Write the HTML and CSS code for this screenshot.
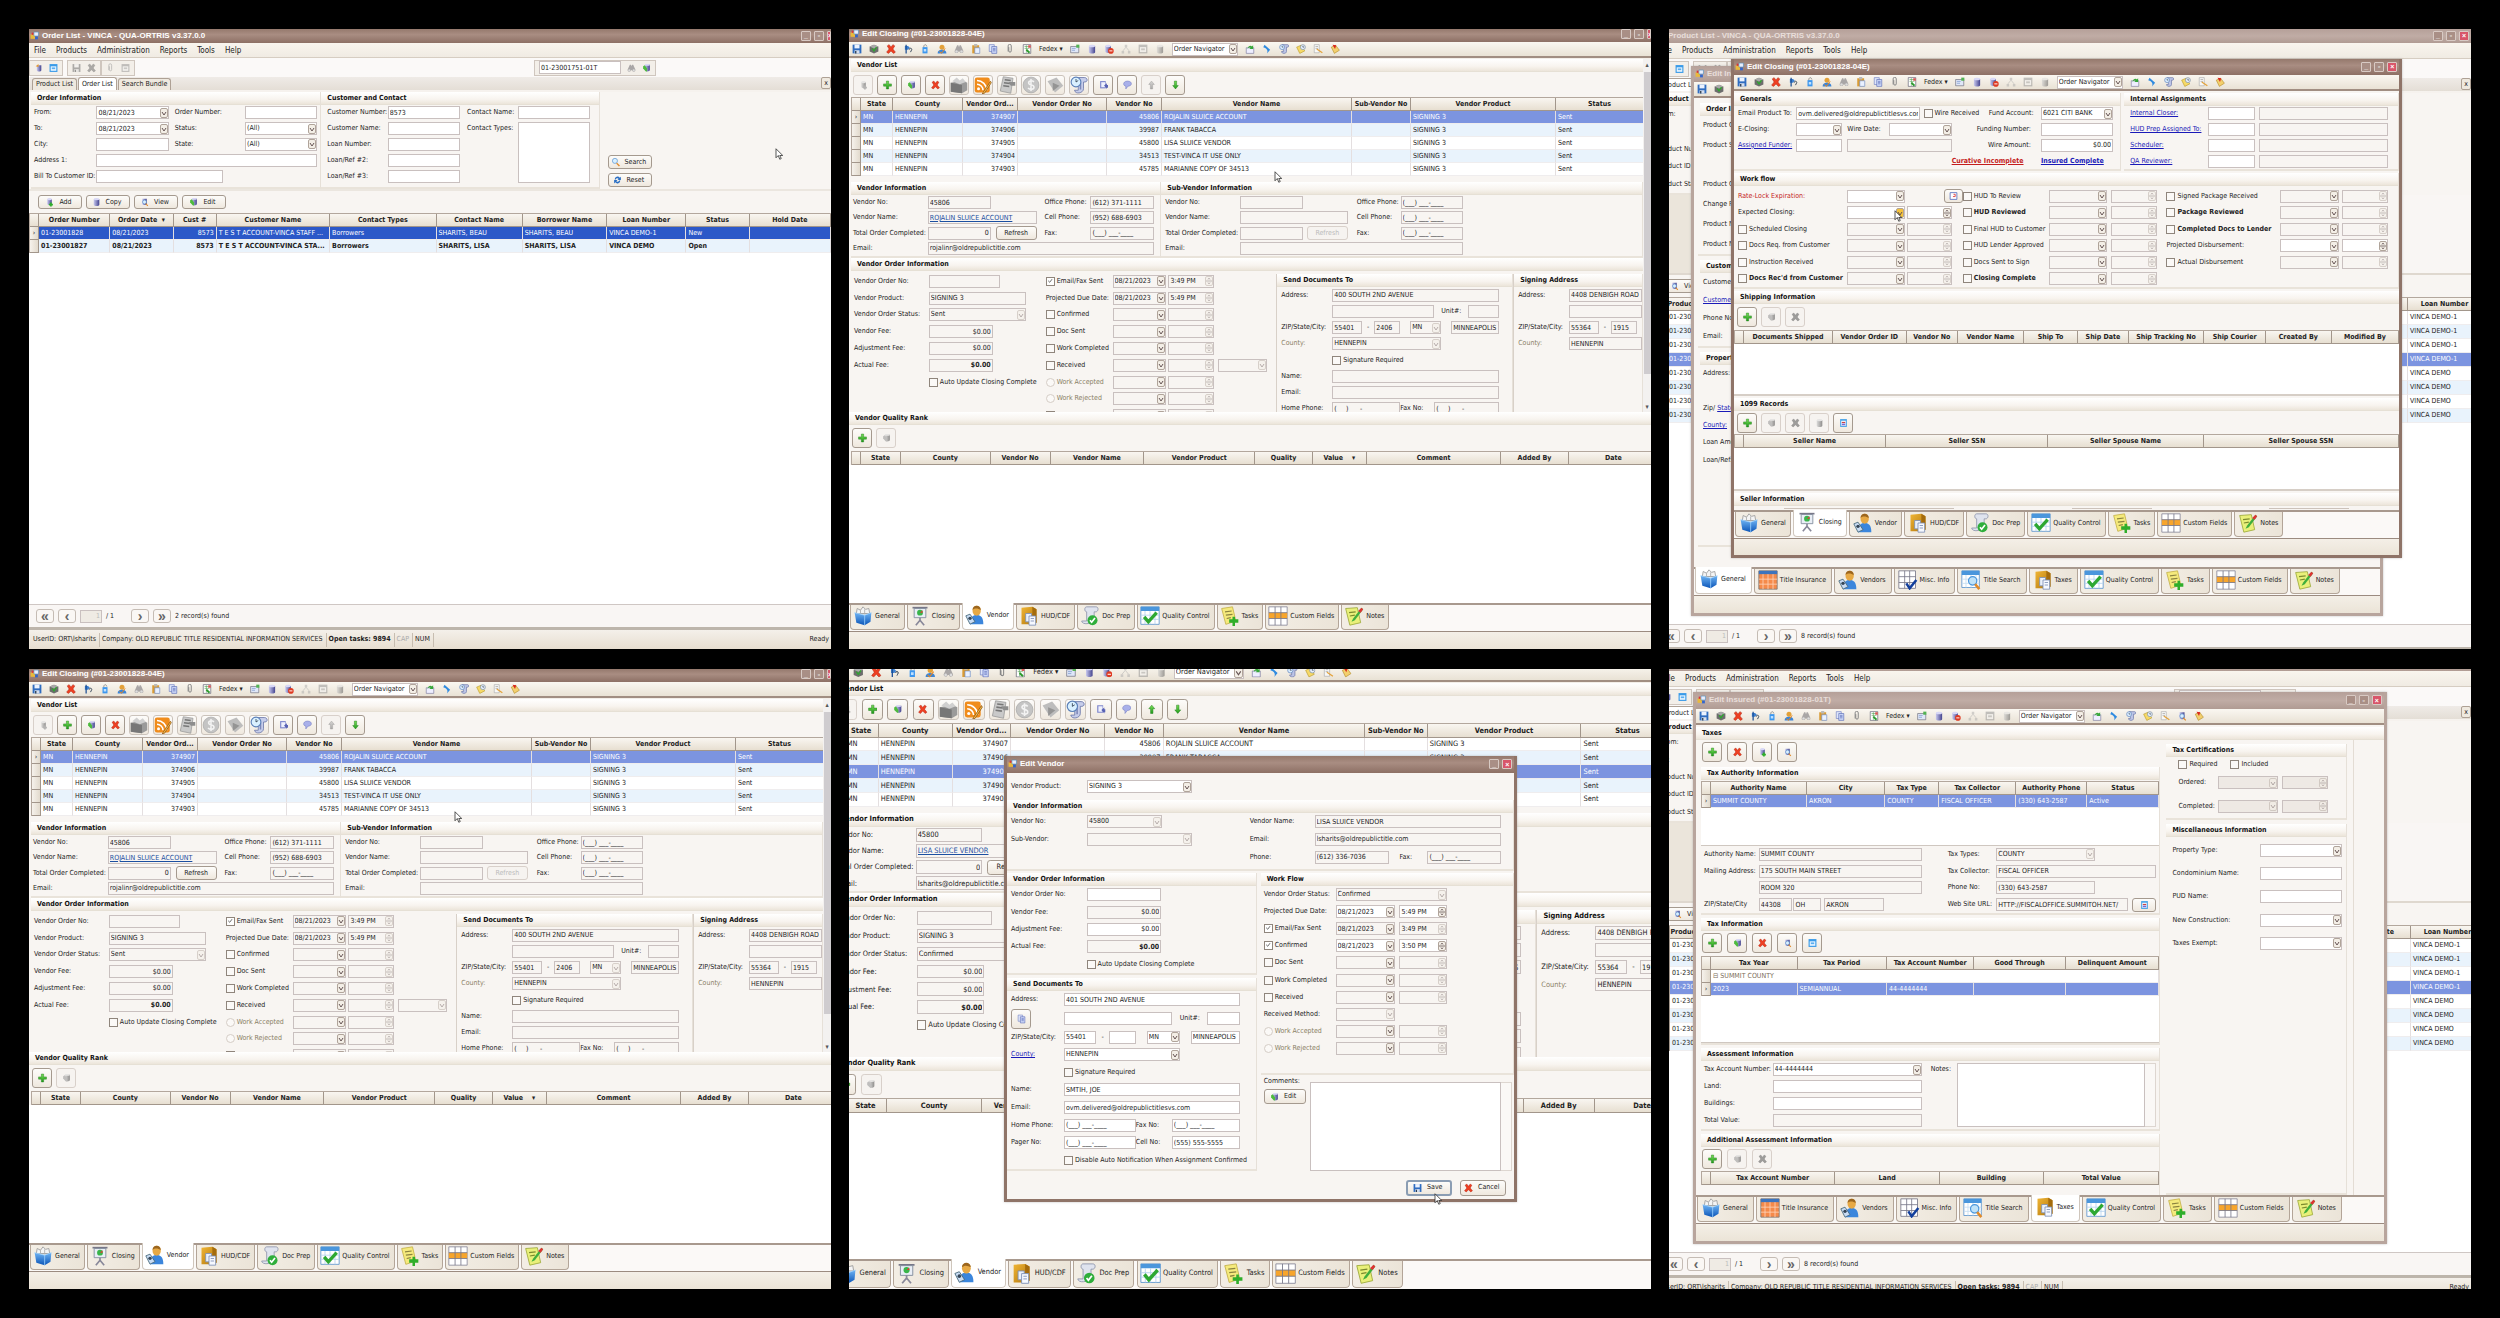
FILE: index.html
```html
<!DOCTYPE html>
<html lang="en">
<head>
<meta charset="utf-8">
<title>VINCA closing walkthrough</title>
<link rel="stylesheet" href="styles.css">
</head>
<body>
<svg class="sprite" aria-hidden="true">
  <defs>
    <linearGradient id="gBlue" x1="0" y1="0" x2="0" y2="1"><stop offset="0" stop-color="#6fb4f4"/><stop offset="1" stop-color="#0b55b8"/></linearGradient>
    <linearGradient id="gCyl" x1="0" y1="0" x2="1" y2="0"><stop offset="0" stop-color="#c9c9ee"/><stop offset="1" stop-color="#44448f"/></linearGradient>
    <linearGradient id="gGreen" x1="0" y1="0" x2="0" y2="1"><stop offset="0" stop-color="#7be05a"/><stop offset="1" stop-color="#1f9a1a"/></linearGradient>
    <linearGradient id="gGold" x1="0" y1="0" x2="1" y2="1"><stop offset="0" stop-color="#f0b535"/><stop offset="1" stop-color="#b0750c"/></linearGradient>
  </defs>
  <symbol id="save" viewBox="0 0 16 16"><path d="M1 1h14v14H1z" fill="#2f6cc0"/><path d="M4 1h8v6H4z" fill="#eaf2ff"/><path d="M4 10h8v5H4z" fill="#d5deee"/><path d="M5 11h2v4H5z" fill="#234"/></symbol>
  <symbol id="safe" viewBox="0 0 16 16"><path d="M1 4l7-3 7 3v8l-7 3-7-3z" fill="#6d6d6d"/><path d="M1 4l7-3 7 3-7 3z" fill="#a9a9a9"/><path d="M5 7l3 4 4-6" stroke="#2ea82e" stroke-width="2" fill="none"/></symbol>
  <symbol id="del" viewBox="0 0 16 16"><path d="M2 3l3-2 3 4 3-4 3 2-3 5 4 5-3 2-4-4-4 4-3-2 4-5z" fill="#ee4023" stroke="#b0200c" stroke-width=".8"/></symbol>
  <symbol id="guide" viewBox="0 0 16 16"><path d="M3 3h5l3 3-3 3H3z" fill="#3b7fd0"/><path d="M5 1v14" stroke="#1d4f94" stroke-width="2"/><path d="M10 9c0-3 4-3 4 0 0 2-2 2-2 4" stroke="#345" stroke-width="1.5" fill="none"/></symbol>
  <symbol id="jar" viewBox="0 0 16 16"><path d="M4 5h8v10H4z" fill="#3d97ee"/><path d="M6 5c0-5 4-5 5-1" stroke="#666" fill="none"/><path d="M6 8h4v4H6z" fill="#bfe0ff"/></symbol>
  <symbol id="user" viewBox="0 0 16 16"><circle cx="8" cy="5" r="4" fill="#e3a13a"/><path d="M1 15c0-5 4-6 7-6s7 1 7 6z" fill="#3c86d8"/><path d="M4 12l3 3 6-8" stroke="#e8851b" stroke-width="1.6" fill="none"/></symbol>
  <symbol id="find" viewBox="0 0 16 16"><path d="M5 2h2l1 3 1-3h2l4 9a3 3 0 0 1-6 1H7a3 3 0 0 1-6-1z" fill="#a9a6a6"/><circle cx="4" cy="12" r="2" fill="#ddd"/><circle cx="12" cy="12" r="2" fill="#ddd"/></symbol>
  <symbol id="paste" viewBox="0 0 16 16"><path d="M2 2h11v13H2z" fill="#d99b35"/><path d="M5 0h5v4H5z" fill="#bbb"/><path d="M6 6h8v9H6z" fill="#e9f1ff" stroke="#6b8ac4"/></symbol>
  <symbol id="copy" viewBox="0 0 16 16"><path d="M2 1h8v11H2z" fill="#dfe6fa" stroke="#6c7cc0"/><path d="M6 4h8v11H6z" fill="#cdd8f8" stroke="#5566b4"/><path d="M8 7h4M8 9h4M8 11h4" stroke="#5566b4"/></symbol>
  <symbol id="clip" viewBox="0 0 16 16"><path d="M6 5v6a2 2 0 0 0 4 0V3a2.500 2.500 0 0 0-5 0v9" stroke="#888" stroke-width="1.600" fill="none"/></symbol>
  <symbol id="sheet" viewBox="0 0 16 16"><path d="M2 1h12v14H2z" fill="#fff" stroke="#556"/><path d="M4 4h8M4 7h8M7 2v12" stroke="#58a558"/><path d="M7 9l5 5" stroke="#2d9a2d" stroke-width="3"/><path d="M10 2h4v4h-4z" fill="#d55"/></symbol>
  <symbol id="mail" viewBox="0 0 16 16"><path d="M1 4h13v10H1z" fill="#dfe7f8" stroke="#667"/><path d="M3 7h6M3 10h5" stroke="#6b8ac4"/><path d="M10 1h5v5h-5z" fill="#53b353"/></symbol>
  <symbol id="db" viewBox="0 0 16 16"><path d="M3 3v10c0 3 10 3 10 0V3z" fill="url(#gCyl)"/><ellipse cx="8" cy="3" rx="5" ry="2" fill="#d8d8f6"/></symbol>
  <symbol id="dbstop" viewBox="0 0 16 16"><path d="M2 3v9c0 3 9 3 9 0V3z" fill="url(#gCyl)"/><ellipse cx="6.500" cy="3" rx="4.500" ry="2" fill="#d8d8f6"/><circle cx="11" cy="11" r="4.500" fill="#df3a22"/><path d="M8.500 11h5" stroke="#fff" stroke-width="1.500"/></symbol>
  <symbol id="tree" viewBox="0 0 16 16"><path d="M6 1h4v4H6zM1 11h4v4H1zM11 11h4v4h-4z" fill="#aaa"/><path d="M8 5L3 11M8 5l5 6" stroke="#aaa" stroke-width="1.500"/></symbol>
  <symbol id="cal" viewBox="0 0 16 16"><path d="M1 1h14v14H1z" fill="#3a9be8"/><path d="M3 5h10v8H3z" fill="#e5f4ff"/><path d="M5 7h6v3H5z" fill="#5aaef0"/></symbol>
  <symbol id="out" viewBox="0 0 16 16"><path d="M2 6h12v9H2z" fill="#eef" stroke="#779"/><path d="M4 8c1-6 6-6 7-4l2-2v6H7l2-2c-2-1-4 0-5 2z" fill="#34a837"/></symbol>
  <symbol id="dart" viewBox="0 0 16 16"><path d="M4 1l9 8-5 6c2-5 0-8-6-10z" fill="#2f8be0"/></symbol>
  <symbol id="scroll" viewBox="0 0 16 16"><path d="M5 1h9c2 0 2 4 0 4h-2v7c0 4-8 4-8 0h3V4c0-3-4-2-4 0z" fill="#bcc4e6" stroke="#6470a4"/><circle cx="5" cy="5" r="4" fill="#d9ecff" stroke="#5b80b8"/><path d="M5 3v2h2" stroke="#345" fill="none"/></symbol>
  <symbol id="memo" viewBox="0 0 16 16"><path d="M1 5l7-3 6 9-8 4z" fill="#f6d967" stroke="#b89a30"/><circle cx="11" cy="5" r="4" fill="#e4edfa" stroke="#789"/><path d="M11 3v2h2" stroke="#345" fill="none"/></symbol>
  <symbol id="pen" viewBox="0 0 16 16"><path d="M2 1h8v13H2z" fill="#f7f7f7" stroke="#aaa"/><path d="M4 4h4M4 7h4" stroke="#999"/><path d="M6 8l9 6" stroke="#e4a33a" stroke-width="2"/></symbol>
  <symbol id="tag" viewBox="0 0 16 16"><path d="M2 5l7-3 6 8-8 5z" fill="#f3cf6d" stroke="#b48e2e"/><path d="M4 1l6 1-2 6z" fill="#d9261c"/></symbol>
  <symbol id="add" viewBox="0 0 16 16"><path d="M6 1h4v5h5v4h-5v5H6v-5H1V6h5z" fill="url(#gGreen)" stroke="#1c7d18" stroke-width=".8"/></symbol>
  <symbol id="edit" viewBox="0 0 16 16"><path d="M5 2v9c0 4 9 4 9 0V2z" fill="url(#gCyl)"/><ellipse cx="9.500" cy="2.500" rx="4.500" ry="1.500" fill="#d8d8f6"/><path d="M2 5l3-2 4 6v5H7L2 9z" fill="#4dbb3d"/></symbol>
  <symbol id="dbadd" viewBox="0 0 16 16"><path d="M4 3v8c0 3 8 3 8 0V3z" fill="url(#gCyl)"/><ellipse cx="8" cy="3" rx="4" ry="2" fill="#d8d8f6"/><path d="M9 9h3v2h2v3h-2v2H9v-2H7v-3h2z" fill="#2fae2b"/></symbol>
  <symbol id="dbfind" viewBox="0 0 16 16"><path d="M4 2v9c0 3 8 3 8 0V2z" fill="url(#gCyl)"/><circle cx="8" cy="8" r="3.500" fill="#d8efff" stroke="#467cc0"/><path d="M10 11l4 4" stroke="#e08a2a" stroke-width="2"/></symbol>
  <symbol id="crate" viewBox="0 0 24 24"><path d="M1 9l16-3 6 3v10l-7 4-15-2z" fill="#9a9a9a"/><path d="M1 9l15 3v11L1 21z" fill="#777"/><path d="M3 7l6-5 4 4 4-3 4 5-8 3z" fill="#d0d0d0"/></symbol>
  <symbol id="rss" viewBox="0 0 24 24"><rect x="1" y="2" width="20" height="20" rx="3" fill="#f08c1c"/><circle cx="6" cy="17" r="2" fill="#fff"/><path d="M4 11a8 8 0 0 1 8 8M4 6a13 13 0 0 1 13 13" stroke="#fff" stroke-width="2" fill="none"/><path d="M22 7L12 22l-1 2 3-1L23 9z" fill="#f7c14a" stroke="#8d5314"/></symbol>
  <symbol id="form" viewBox="0 0 24 24"><path d="M7 1l13 2-3 20-14-3z" fill="#c9c9c9" stroke="#999"/><path d="M9 5l8 1M8 9l8 1M7 13l8 1" stroke="#777" stroke-width="2"/><path d="M14 8h9v5h-6z" fill="#8d8d8d"/></symbol>
  <symbol id="coin" viewBox="0 0 24 24"><circle cx="12" cy="12" r="10.500" fill="#c4c4c4" stroke="#aaa"/><path d="M16 8c-3-3-8-1-7 2 1 3 7 1 7 5 0 3-5 4-8 1M12 4v16" stroke="#f3f3f3" stroke-width="2" fill="none"/></symbol>
  <symbol id="send" viewBox="0 0 24 24"><path d="M2 7l12-5 9 11-11 9z" fill="#bdbdbd"/><path d="M9 9l9 4-9 7z" fill="#949494"/></symbol>
  <symbol id="scrolls" viewBox="0 0 24 24"><path d="M10 2h9c5 0 5 6 1 6h-2v9c0 6-11 8-12 2h5V7c0-3-1-5-1-5z" fill="#c6cdea" stroke="#6470a4"/><path d="M14 9v9" stroke="#7f88b8" stroke-width="2"/><circle cx="8" cy="8" r="6.500" fill="#d9f0ff" stroke="#5b80b8" stroke-width="1.500"/><path d="M8 4v4l3-2" stroke="#234" fill="none"/></symbol>
  <symbol id="clip2" viewBox="0 0 16 16"><path d="M2 1h10v13H2z" fill="#7e86cc"/><path d="M4 3h7v9H4z" fill="#eef0fd"/><path d="M9 9l5-4v3h2v5h-2v2z" fill="#5862b4"/></symbol>
  <symbol id="talk" viewBox="0 0 16 16"><path d="M8 1c9 0 9 9 1 9l-4 5v-5C-1 9 0 1 8 1z" fill="#a9b0ea" stroke="#767ec4"/></symbol>
  <symbol id="up" viewBox="0 0 16 16"><path d="M8 1l5 6h-3v8H6V7H3z" fill="url(#gGreen)" stroke="#1c7d18" stroke-width=".8"/></symbol>
  <symbol id="down" viewBox="0 0 16 16"><path d="M8 15l5-6h-3V1H6v8H3z" fill="url(#gGreen)" stroke="#1c7d18" stroke-width=".8"/></symbol>
  <symbol id="web" viewBox="0 0 16 16"><path d="M2 1h12v14H2z" fill="#4aa4e8"/><path d="M4 4h8v9H4z" fill="#fff"/><path d="M5 6h6v2H5z" fill="#c74545"/><path d="M5 9h6v3H5z" fill="#7a6ad0"/></symbol>
  <symbol id="page" viewBox="0 0 16 16"><path d="M2 2h12v12H2z" fill="#fff" stroke="#5570c0" stroke-width="1.500"/><path d="M8 5h3v4H7" stroke="#d33" stroke-width="1.500" fill="none"/></symbol>
  <symbol id="lens" viewBox="0 0 16 16"><circle cx="7" cy="6" r="4.500" fill="#d8efff" stroke="#6fa3d8" stroke-width="1.500"/><path d="M10 10l5 5" stroke="#e08a2a" stroke-width="2.500"/></symbol>
  <symbol id="cycle" viewBox="0 0 16 16"><path d="M3 7a5 5 0 0 1 9-3l2-2v6H8l2-2a3 3 0 0 0-5 1zM13 9a5 5 0 0 1-9 3l-2 2V8h6l-2 2a3 3 0 0 0 5-1z" fill="#2b6fc4"/></symbol>
  <symbol id="bolt" viewBox="0 0 16 16"><path d="M5 3v9c0 3 8 3 8 0V3z" fill="url(#gCyl)"/><path d="M3 5l5-4v5z" fill="#e89a2a"/></symbol>
  <symbol id="app" viewBox="0 0 16 16"><path d="M1 5h8v8H1z" fill="#e9b93c"/><path d="M7 1h8v7H7z" fill="#e9eefc" stroke="#48b"/><path d="M3 2h3v4H3z" fill="#d33"/><path d="M9 9h5v5H9z" fill="#36c"/></symbol>
  <symbol id="bucket" viewBox="0 0 24 24"><path d="M4 9l1-6 4 2 3-4 3 3 4-1 1 6z" fill="#f4f4f4" stroke="#999"/><path d="M9 5v5M14 4v6" stroke="#aaa"/><path d="M2 8l12 3 8-3-1 11-7 4-10-3z" fill="url(#gBlue)"/><path d="M2 8l12 3 8-3M14 11v12" stroke="#9bd1ff" fill="none"/></symbol>
  <symbol id="board" viewBox="0 0 24 24"><path d="M3 2h18" stroke="#778" stroke-width="2"/><path d="M5 3h14v11H5z" fill="#e9eef6" stroke="#7b8798"/><circle cx="12" cy="8" r="3.500" fill="#39b54a"/><path d="M12 8l3-3v3z" fill="#e33"/><path d="M12 14v5M12 17l-5 6M12 17l5 6" stroke="#889" stroke-width="2"/></symbol>
  <symbol id="person" viewBox="0 0 24 24"><path d="M6 23c0-8 3-11 8-11s8 3 8 11z" fill="#3b86dc"/><ellipse cx="14" cy="7" rx="5" ry="6" fill="#e7a944"/><path d="M9 6c0-7 10-7 10 0-3-2-7-3-10 0z" fill="#9c661e"/><path d="M1 13l5-2 6 9-6 3z" fill="#c9dcf4" stroke="#467"/><circle cx="6" cy="16" r="2" fill="#345"/></symbol>
  <symbol id="folder" viewBox="0 0 24 24"><path d="M3 2l13-1 5 3v16l-3 2H3z" fill="url(#gGold)"/><path d="M16 1l5 3v16l-5-2z" fill="#a56c0c"/><path d="M8 9h7v10H8z" fill="#eaf0fa" stroke="#7b8fb5"/><path d="M12 12h8v11h-8z" fill="#f6f9ff" stroke="#7b8fb5"/><path d="M14 15h4M14 18h4" stroke="#7b8fb5"/></symbol>
  <symbol id="roll" viewBox="0 0 24 24"><path d="M8 1h11c4 0 3 6 0 6h-2v8c0 6-14 9-15 3h6V7c-3 0-3-6 0-6z" fill="#dfe3ee" stroke="#8d94ab"/><circle cx="15" cy="17" r="6" fill="#2fae3b"/><path d="M12 17l2 2.500 4-5" stroke="#fff" stroke-width="2" fill="none"/></symbol>
  <symbol id="check" viewBox="0 0 24 24"><path d="M1 1h22v21H1z" fill="#fff" stroke="#5c94cc"/><path d="M1 1h22v5H1z" fill="#4a96dc"/><path d="M6 6v16M12 6v16M18 6v16M1 11h22M1 16h22" stroke="#b6d2ee"/><path d="M5 13l5 6L20 8" stroke="#2da832" stroke-width="4" fill="none"/></symbol>
  <symbol id="todo" viewBox="0 0 24 24"><path d="M2 3l13-2 4 17-12 4z" fill="#f5ea7c" stroke="#c4b14a"/><path d="M6 7l8-1M7 11l8-1M8 15l5-1" stroke="#8b8340" stroke-width="1.500"/><path d="M15 13h3v3h4v4h-4v4h-3v-4h-4v-4h4z" fill="#2fae2b"/></symbol>
  <symbol id="grid3" viewBox="0 0 24 24"><path d="M1 1h22v22H1z" fill="#fff" stroke="#889"/><path d="M1 8h22v7H1z" fill="#f7a52c"/><path d="M8.500 1v22M15.500 1v22M1 8h22M1 15h22" stroke="#778"/></symbol>
  <symbol id="note" viewBox="0 0 24 24"><path d="M2 3l14-1 4 18-13 3z" fill="#e9f07a" stroke="#9caa3a"/><path d="M6 8l8-1M7 12l6-1" stroke="#7b8a2e" stroke-width="1.500"/><path d="M21 2l2 2-10 13-4 2 2-4z" fill="#3fae3d"/><path d="M21 2l2 2-3 4-3-2z" fill="#d33"/></symbol>
  <symbol id="ogrid" viewBox="0 0 24 24"><path d="M1 1h22v22H1z" fill="#f58a4a" stroke="#777"/><path d="M1 1h22v4H1z" fill="#3d74bd"/><path d="M6 5v18M12 5v18M18 5v18M1 11h22M1 17h22" stroke="#fdd2b8"/></symbol>
  <symbol id="misc" viewBox="0 0 24 24"><path d="M1 1h20v21H1z" fill="#fff" stroke="#778"/><path d="M8 1v21M14 1v21M1 8h20M1 15h20" stroke="#778"/><path d="M10 16l4 6 8-10" stroke="#123f9c" stroke-width="3" fill="none"/></symbol>
  <symbol id="tsearch" viewBox="0 0 24 24"><path d="M1 1h21v20H1z" fill="#fff" stroke="#5c94cc"/><path d="M1 1h21v5H1z" fill="#4a96dc"/><path d="M6 6v15M12 6v15M18 6v15M1 11h21M1 16h21" stroke="#c4dcf2"/><circle cx="14" cy="13" r="5" fill="#bfe2f8" stroke="#4a96dc" stroke-width="1.500"/><path d="M17 17l5 6" stroke="#e08a2a" stroke-width="3"/></symbol>
  <symbol id="ptr" viewBox="0 0 10 16"><path d="M1 1v12l3-3 2 5 2-1-2-4h4z" fill="#fff" stroke="#222"/></symbol>
</svg>
<main class="wall" id="wall"></main>
<script src="app.js"></script>
</body>
</html>
```
FILE: styles.css
```css
* { box-sizing: border-box; margin: 0; padding: 0; }
body {
  background: #000;
  color: #222;
  font: 7px/9px "DejaVu Sans Condensed", "Liberation Sans", Arial, sans-serif;
}
.sprite { position: absolute; width: 0; height: 0; }
.ic { display: block; width: 9px; height: 10px; flex: none; }
.dim { filter: grayscale(1) opacity(.5); }
input, select, textarea, button { font: inherit; color: inherit; min-width: 0; border-radius: 0; outline: 0; }
a { color: #1a1ab8; }
label, h3, .cell { white-space: nowrap; min-width: 0; }

/* Six captured screens, three across */
.wall {
  display: grid;
  grid-template-columns: repeat(3, minmax(0, 1fr));
  grid-template-rows: repeat(2, minmax(0, 1fr));
  gap: 20px 18px;
  height: 100vh;
  min-height: 1100px;
  padding: 29px;
}
.panel { position: relative; overflow: hidden; background: #f8f5f2; display: flex; flex-direction: column; }
.fill { flex: 1; background: #fff; min-height: 0; }

/* Window chrome */
.title {
  height: 14px; flex: none; display: flex; align-items: center; gap: 3px; padding: 0 2px 1px 1px;
  background: linear-gradient(#95796d, #a98d82 40%, #8d7065);
  color: #fff; font: bold 8px/10px "Liberation Sans", Arial, sans-serif;
}
.title span { flex: 1; white-space: nowrap; }
.title.faded { background: linear-gradient(#b5a099, #c0aca5 50%, #b09b93); color: #e8deda; }
.title.tall { height: 16px; }
.title.short { height: 13px; padding-bottom: 3px; }
.title button { width: 10px; height: 10px; border: 1px solid #d8cac4; background: #a98f86; color: #fff; font-size: 7px; line-height: 7px; border-radius: 1px; }
.title button.close { background: #d8566a; }
.title.edge button.close { width: 4px; margin-right: -2px; overflow: hidden; }
.menu { height: 15px; flex: none; display: flex; align-items: center; gap: 10px; padding-left: 5px; font-size: 8px; background: linear-gradient(#f9f5ee, #f0ebe3); border-bottom: 1px solid #d6cdc2; }
.menu a { color: #222; text-decoration: none; }
.tools { height: 16px; flex: none; display: flex; align-items: center; gap: 7px; padding: 0 3px; background: linear-gradient(#faf7f1, #e9e2d5); border-bottom: 2px solid #a18e82; }
.tools .ic { width: 10px; }
.tools .drop { font-size: 7px; border: 0; background: none; white-space: nowrap; }
.tools .dd { width: 66px; }
.maintools { height: 19px; flex: none; display: flex; align-items: center; background: #fbf9f8; }
.maintools div { height: 16px; display: flex; align-items: center; gap: 6px; padding: 0 4px; border: 1px solid #cfc6be; background: #f3efe9; }
.maintools div:nth-child(2) { margin-left: 4px; }
.maintools .goto { margin-left: auto; margin-right: 175px; }
.maintools .goto .in { width: 82px; }
.doctabs { height: 15px; flex: none; display: flex; align-items: flex-end; gap: 1px; padding-left: 3px; background: linear-gradient(#efebe7, #e4ded6); border-bottom: 2px solid #f6f2ee; }
.doctabs button { height: 12px; padding: 0 3px; border: 1px solid #aea195; border-bottom: 0; background: #efe9df; border-radius: 3px 3px 0 0; white-space: nowrap; }
.doctabs .on { background: #fff; height: 13px; }
.doctabs .shut { margin-left: auto; padding: 0 2px; border-radius: 2px; border-bottom: 1px solid #aea195; margin-bottom: 1px; }
.pager { height: 23px; flex: none; display: flex; align-items: center; gap: 4px; padding-left: 7px; border-top: 1px solid #cfc7c4; background: #f9f6f4; }
.pager button { width: 18px; height: 14px; border: 1px solid #c5bcb4; border-radius: 3px; background: #faf7f4; color: #666; font: bold 14px/9px "Liberation Sans", Arial, sans-serif; }
.pager .in { width: 22px; text-align: right; background: #efebe4; color: #bbb; }
.pager .cell { width: 21px; }
.status { height: 22px; flex: none; display: flex; align-items: center; padding: 1px 2px 0; background: linear-gradient(#f4f0ea, #e7ded0); border-top: 3px solid #bdb5ab; }
.status span { padding: 0 3px 0 2px; border-right: 1px solid #c7bdb0; height: 14px; line-height: 13px; white-space: nowrap; }
.status span:last-child { margin-left: auto; border: 0; padding: 0; }
.off { color: #aaa; }
.foot { height: 18px; flex: none; border-top: 1px solid #9b8b80; background: linear-gradient(#f4efe7, #ebe4d7); }

/* Grouped sections */
.grp { display: flex; flex-direction: column; min-width: 0; flex: none; background: #f8f5f2; border-right: 1px solid #e6e0d8; border-bottom: 2px solid #e9e3da; }
.grp h3, .head { height: 13px; flex: none; padding-left: 6px; font-size: 7px; line-height: 12px; font-weight: bold; color: #111; background: linear-gradient(#fff, #f8f4ef 60%, #ece5da); border-bottom: 1px solid #e6e0d5; }
.form { flex: 1; display: grid; grid-auto-rows: 1fr; align-items: center; padding-left: 2px; min-height: 0; }
.form > * { min-width: 0; }
.pair { display: flex; flex: none; }
.bar { display: flex; align-items: center; gap: 4px; padding: 0 3px; flex: none; height: 26px; }
.bar.low { height: 23px; }

/* Controls */
.in, .dd, .sp { height: 13px; width: 100%; border: 1px solid #c9c0bf; background: #fff; padding: 0 1px; display: block; text-overflow: clip; }
.dd, .sp { display: flex; align-items: center; padding-right: 0; }
.dd input, .dd select, .sp input { flex: 1; width: 100%; border: 0; background: none; appearance: none; height: 11px; }
.dd i, .sp i { flex: none; width: 8px; height: 10px; border: 1px solid #b0a49a; border-radius: 2px; background: #f3eee6 url("data:image/svg+xml,%3Csvg xmlns='http://www.w3.org/2000/svg' viewBox='0 0 8 10'%3E%3Cpath d='M2 4l2 3 2-3' fill='none' stroke='%23655' stroke-width='1'/%3E%3C/svg%3E") center / 8px 10px no-repeat; }
.sp i { background-image: url("data:image/svg+xml,%3Csvg xmlns='http://www.w3.org/2000/svg' viewBox='0 0 8 10'%3E%3Cpath d='M1 5h6M3 3.500l1-1.500 1 1.500M3 6.500l1 1.500 1-1.500' fill='none' stroke='%23655' stroke-width='.8'/%3E%3C/svg%3E"); }
.ro { background: #f8f5f2; }
.dis { background: #eee9e4; }
.sp.ro i, .dd.lite i { opacity: .45; }
.hot i { background-color: #f5c33b; }
.num input, .num { text-align: right; }
.b { font-weight: bold; }
.lk { color: #1c4fa0; text-decoration: underline; }
.ck { display: flex; align-items: center; gap: 2px; }
.ck input { appearance: none; width: 9px; height: 9px; border: 1px solid #8f857c; background: #fbf9f7; flex: none; }
.ck input:checked { background: #fff url("data:image/svg+xml,%3Csvg xmlns='http://www.w3.org/2000/svg' viewBox='0 0 9 9'%3E%3Cpath d='M1.500 3.500l2 2 3-4' fill='none' stroke='%23444'/%3E%3C/svg%3E") no-repeat; }
.ck input[type=radio] { border-radius: 50%; border-color: #d5cdc6; }
.ck.mute, .mute { color: #8a8065; }
.red { color: #c41d1d; }
.area { width: 100%; height: 100%; border: 1px solid #c9c0bf; background: #fff; resize: none; display: block; }
.btn { height: 15px; display: flex; align-items: center; justify-content: center; gap: 5px; padding: 0 6px 0 3px; border: 1px solid #a59a8f; border-radius: 3px; background: linear-gradient(#fdfcfa, #efe8de); white-space: nowrap; }
.btn.w { width: 44px; height: 14px; }
.btn.flat { width: 100%; height: 14px; padding: 0; }
.btn:disabled { color: #bbb; border-color: #d8d0ca; background: #f6f3f0; }
.btn:disabled .ic { filter: grayscale(1) opacity(.6); }
.sq { width: 20px; height: 20px; padding: 0; gap: 0; }
.sq.big { border-color: #cbc3bb; }
.sq.big .ic { width: 18px; height: 18px; }
.r { text-align: right; padding-right: 5px; }

/* Column placement shared by every form grid */
.c1 { grid-column-start: 1; }
.c2 { grid-column-start: 2; } .c3 { grid-column-start: 3; } .c4 { grid-column-start: 4; } .c5 { grid-column-start: 5; }
.c6 { grid-column-start: 6; } .c7 { grid-column-start: 7; } .c8 { grid-column-start: 8; } .c9 { grid-column-start: 9; }
.c10 { grid-column-start: 10; } .c11 { grid-column-start: 11; } .c12 { grid-column-start: 12; } .c13 { grid-column-start: 13; } .c15 { grid-column-start: 15; }
.s2 { grid-column-end: span 2; } .s3 { grid-column-end: span 3; } .s4 { grid-column-end: span 4; } .s5 { grid-column-end: span 5; }
.s6 { grid-column-end: span 6; } .s9 { grid-column-end: span 9; }

/* Data tables */
.tbl { width: 100%; table-layout: fixed; border-collapse: separate; border-spacing: 0; background: #fff; border: 1px solid #b3a79d; border-width: 1px 0 0 1px; flex: none; }
.tbl th { height: 13px; font-size: 7px; line-height: 9px; overflow: hidden; white-space: nowrap; background: linear-gradient(#f9f6f1, #e7dfd1); border: solid #a2968b; border-width: 0 1px 1px 0; }
.tbl td { height: 13px; padding: 0 2px; overflow: hidden; white-space: nowrap; border-right: 1px solid #e4dfe0; border-bottom: 1px solid #efedee; }
.tbl td.h { background: linear-gradient(90deg, #f6f2ec, #e2dacd); border-color: #a2968b; padding: 0; text-align: center; }
.tbl tr:nth-child(even) td:not(.h) { background: #e9f3fc; }
.tbl tr.sel td:not(.h) { background: #7c94e0; color: #fff; }
.tbl.deep tr.sel td:not(.h) { background: #2c58c8; }
.tbl .n { text-align: right; }
.tallrows td { height: 14px; }
.tree td { background: #fff; color: #7b6d58; }

/* Bottom navigation */
.navtabs { height: 28px; flex: none; display: flex; gap: 2px; padding: 0 1px 1px; border-top: 2px solid #a8998e; background: #fbf9f7; }
.navtabs button { display: flex; align-items: center; gap: 2px; padding: 0 4px 2px 2px; border: 1px solid #b3a598; border-top: 0; border-radius: 0 0 4px 4px; background: linear-gradient(90deg, #f3eee5, #ebe4d8); white-space: nowrap; }
.navtabs .on { background: #fff; margin-top: -2px; border-color: #cfc6bc; }
.navtabs .ic { width: 20px; height: 20px; }
.win .navtabs button { padding: 0 4px 2px 3px; }
.back .navtabs button { padding: 0 5px 2px 3px; }

/* Order list */
.search { display: flex; height: 99px; flex: none; border-bottom: 2px solid #ebe6df; padding-left: 2px; }
.search .form { padding-bottom: 3px; }
.ol-a { flex: 293; } .ol-a .form { padding-left: 3px; grid-template-columns: 63fr 73fr 6fr 49fr 22fr 73fr 3fr; }
.ol-b { flex: 281; } .ol-b .form { padding-left: 6px; grid-template-columns: 61fr 73fr 7fr 51fr 73fr 9fr; }
.ol-c { flex: 226; display: flex; flex-direction: column; justify-content: flex-end; gap: 4px; padding: 0 0 2px 8px; }
.types { grid-row: 2 / span 4; grid-column-start: 5; align-self: stretch; padding: 1px 0; }
.acts { height: 22px; padding-left: 9px; }

/* Edit Closing, vendor page */
.vend { flex: 1; display: flex; flex-direction: column; min-height: 0; }
.top { height: 354px; flex: none; display: flex; border-top: 1px solid #f3eee8; }
.body { flex: 1; min-width: 0; padding-left: 2px; display: flex; flex-direction: column; overflow: hidden; }
.sbar { width: 8px; flex: none; display: flex; flex-direction: column; align-items: center; background: #f3f1f0; color: #555; font-size: 7px; padding-top: 2px; }
.sbar b { width: 7px; height: 302px; background: #cfcccf; margin: 2px 0 auto; }
.body .icons { height: 25px; gap: 4px; padding-left: 2px; }
.vi { height: 76px; margin-top: 6px; }
.vi-a { flex: 310; } .vi-a .form { grid-template-columns: 75fr 63fr 5fr 41fr 8fr 46fr 64fr 6fr; }
.vi-b { flex: 482; } .vi-b .form { padding-left: 4px; grid-template-columns: 75fr 63fr 4fr 41fr 9fr 44fr 63fr 179fr; }
.voi { flex: 1; display: flex; overflow: hidden; min-height: 0; }
.voi-a.form { flex: 426; height: 151px; margin-top: 2px; padding-left: 3px; grid-template-columns: 75fr 64fr 7fr 26fr 20fr 67fr 54fr 2fr 46fr 4fr 49fr 9fr; }
.voi .grp { margin-top: 3px; height: 145px; border-left: 1px solid #d8d0c8; }
.voi .voi-b { flex: 237; } .voi-b .form { padding-left: 4px; grid-template-columns: 51fr 30fr 12fr 26fr 10fr 24fr 7fr 10fr 17fr 31fr 13fr; }
.voi .voi-c { flex: 129; overflow: hidden; } .voi-c .form { padding-left: 4px; grid-template-columns: 51fr 30fr 12fr 26fr 5fr; }
.rank { margin-right: -8px; padding-left: 2px; }
.zoomed { position: absolute; zoom: 1.06; left: -16px; top: -17px; width: 106%; height: 106%; display: flex; flex-direction: column; }

/* Windows floating over another screen */
.win { position: absolute; display: flex; flex-direction: column; background: #f8f5f2; border: solid #8f7468; border-width: 0 3px 3px; box-shadow: 0 0 2px #8888; overflow: hidden; }
.win.back { border-color: #b8a59d; }
.cur { position: absolute; width: 8px; height: 12px; }
.cur-1 { left: 93%; top: 119px; } .cur-2 { left: 53%; top: 142px; } .cur-3 { left: 28%; top: 181px; } .cur-4 { left: 73%; top: 524px; }
.desk { height: calc(100% + 20px); flex: none; display: flex; flex-direction: column; margin-left: -14px; }
.desk.up { margin: -12px 0 0 -11px; }
.desk .menu { height: 16px; } .desk .doctabs { height: 15px; }
.desk-search { height: 102px; width: 300px; flex: none; }
.desk-search .form { padding-left: 3px; }
.shade { height: 80px; flex: none; background: linear-gradient(90deg, #ebe5db 50%, #f9f6f4 50%); border-bottom: 2px solid #dfd8cf; }

/* Edit Insured behind */
.ins { left: 22px; top: 37px; width: 86.300%; height: 550px; }
.ins-col { flex: 1; padding: 5px 0 0 4px; display: flex; flex-direction: column; gap: 4px; min-height: 0; overflow: hidden; }
.ins-col .grp { width: 97%; padding-left: 2px; }
.ins-col .form { padding-left: 3px; }
.g1 { height: 153px; } .g2 { height: 88px; } .g3 { height: 195px; }
.g3 .form { padding-bottom: 76px; }

/* Edit Closing, closing page */
.clo { left: 62px; top: 30px; width: 83.700%; height: 499px; }
.gen { height: 78px; margin-top: 2px; gap: 3px; }
.gen-a { flex: 386; } .gen-a .form { padding-left: 4px; grid-template-columns: 58fr 46fr 5fr 42fr 30fr 4fr 28fr 37fr 47fr 5fr 72fr 7fr; }
.gen-b { flex: 274; } .gen-b .form { padding-left: 6px; grid-template-columns: 77fr 47fr 4fr 128fr 10fr; }
.wf { height: 116px; margin-top: 2px; } .wf .form { padding: 2px 0 0 4px; grid-template-columns: 109fr 57fr 2fr 37fr 8fr 11fr 86fr 58fr 4fr 46fr 9fr 113fr 59fr 3fr 46fr 10fr; }
.clo .head { margin-top: 2px; }
.gap1, .gap2 { height: 52px; background: #fff; border-bottom: 2px solid #d6cec6; flex: none; }
.gap2 { height: 43px; }
.seller { flex: 1; display: flex; justify-content: space-between; padding: 2px 50px; min-height: 0; }
.seller i { width: 80px; border: 1px solid #ccc2ba; border-bottom: 0; }
.seller i:first-child { width: 170px; }

/* Edit Vendor dialog */
.dlg { left: 155px; top: 87px; width: 64%; height: 446px; }
.dlg .title { height: 17px; }
.dg1 { height: 27px; } .form.dg1, .dg2 .form { flex: none; padding-left: 4px; grid-template-columns: 76fr 75fr 30fr 58fr 65fr 75fr 10fr 28fr 74fr 12fr; }
.dg2 { height: 71px; } .dg2 .form { flex: 1; padding-bottom: 3px; }
.dcols { flex: 1; display: flex; gap: 4px; padding-top: 2px; min-height: 0; }
.dl { flex: 250; min-width: 0; display: flex; flex-direction: column; } .dr { flex: 254; min-width: 0; display: flex; flex-direction: column; }
.dg3 { height: 102px; margin-bottom: 3px; } .dg3 .form { padding-left: 4px; grid-template-columns: 76fr 75fr 95fr; }
.dg4 { height: 193px; } .dg4 .form { padding-left: 4px; grid-template-columns: 53fr 32fr 13fr 27fr 11fr 25fr 8fr 11fr 16fr 33fr 16fr; }
.dg5 { height: 202px; } .dg5 .form { padding: 0 0 16px 3px; grid-template-columns: 72fr 60fr 4fr 48fr 66fr; }
.cmt { display: flex; height: 98px; gap: 4px; padding: 2px 2px 2px 3px; }
.cmt > div:first-child { width: 42px; display: flex; flex-direction: column; gap: 3px; }
.cmt .wrap { flex: 1; margin-top: 5px; }
.wrap { display: flex; }
.wrap i { width: 11px; border: 1px solid #ddd6d0; border-left: 0; background: #faf8f6; flex: none; }
.btns { display: flex; justify-content: flex-end; gap: 8px; height: 23px; flex: none; align-items: center; padding-right: 8px; }
.btns .btn { width: 46px; height: 16px; }
.btns .def { border: 2px solid #8b9db3; }

/* Edit Insured, taxes page */
.tax { left: 24px; top: 23px; width: 86.500%; height: 552px; }
.tax .title { height: 17px; }
.tax > .head { margin-top: 2px; }
.taxes { flex: 1; display: flex; gap: 6px; padding-left: 5px; min-height: 0; overflow: hidden; }
.tl { flex: 461; min-width: 0; display: flex; flex-direction: column; gap: 3px; } .tr { flex: 181; min-width: 0; display: flex; flex-direction: column; gap: 4px; padding-top: 4px; } .tz { flex: 30; border-left: 1px solid #e3dcd4; }
.tl .bar { gap: 5px; padding-left: 1px; height: 24px; }
.tg1 { height: 148px; } .tg1 .form, .tg3 .form { padding-left: 3px; }
.tg1 .form { grid-template-columns: 55fr 33fr 2fr 28fr 3fr 60fr 38fr 26fr 49fr 99fr 33fr 4fr 25fr 3fr; }
.tg1 .tbl, .tg2 .tbl { margin-top: 1px; }
.pad1 { height: 38px; background: #fff; border-bottom: 1px solid #cfc7c0; flex: none; }
.tg2 { height: 127px; } .tg2 .pad1 { flex: 1; height: auto; }
.tg3 { height: 83px; } .tg3 .form { grid-template-columns: 69fr 150fr 9fr 26fr 201fr 3fr; }
.tnotes { grid-row: 1 / span 4; grid-column-start: 5; align-self: stretch; padding: 2px 0; }
.tg4 { height: 64px; }
.tg5 { height: 76px; } .tg5 .form { padding-left: 12px; grid-template-columns: 40fr 60fr 4fr 46fr 18fr; grid-template-rows: 14px 1fr 1fr; }
.req { grid-column: 1 / -1; display: flex; gap: 13px; }
.tg6 { flex: 1; } .tg6 .form { flex: none; height: 116px; padding-left: 6px; grid-template-columns: 88fr 82fr 4fr; margin-top: 2px; }
```
FILE: app.js
```js
// Builders for the controls that every screen shares.
let serial = 0, pending = null;
const take = () => { const id = pending || 'f' + (++serial); const own = pending; pending = null; return own ? `id="${id}"` : `id="${id}" aria-label="Value"`; };
const L = (t, c = '') => { pending = 'f' + (++serial); return `<label for="${pending}" class="${c}">${t}</label>`; };
const A = (t, c = '') => `<a href="#" class="${c} cell">${t}</a>`;
const T = (v = '', c = '') => `<input type="text" class="in ${c}" ${take()} value="${v}">`;
const S = (v = '', c = '') => `<span class="dd ${c}"><select ${take()}><option>${v}</option></select><i></i></span>`;
const D = (v = '', c = '') => `<span class="dd ${c}"><input type="text" ${take()} value="${v}"><i></i></span>`;
const M = (v = '', c = '') => `<span class="sp ${c}"><input type="text" ${take()} value="${v}"><i></i></span>`;
const K = (t, c = '', on = false, type = 'checkbox') => `<label class="ck ${c}"><input type="${type}" ${on ? 'checked' : ''}>${t}</label>`;
const I = (n, c = '') => `<svg class="ic ${c}" aria-hidden="true"><use href="#${n}"/></svg>`;
const B = (icon, t = '', c = '', off = false) => `<button class="btn ${c}" ${off ? 'disabled' : ''} ${t ? '' : `aria-label="${icon}"`}>${icon ? I(icon) : ''}${t}</button>`;
const G = (title, body, c = '') => `<section class="grp ${c}"><h3>${title}</h3>${body}</section>`;
const F = (body, c = '') => `<div class="form ${c}">${body}</div>`;
const MASK = '(___) ___-____';

const title = (t, c = '') => `<header class="title ${c}">${I('app')}<span>${t}</span><button aria-label="Minimize">_</button><button aria-label="Restore">▫</button><button class="close" aria-label="Close">×</button></header>`;
const menu = () => `<nav class="menu">${['File', 'Products', 'Administration', 'Reports', 'Tools', 'Help'].map(m => `<a href="#">${m}</a>`).join('')}</nav>`;
const mainTools = () => `<div class="maintools"><div>${I('bolt')}${I('cal')}</div><div>${I('save', 'dim')}${I('del', 'dim')}</div><div>${I('clip', 'dim')}${I('cal', 'dim')}</div><div class="goto">${T('01-23001751-01T')}${I('find')}${I('edit')}</div></div>`;
const docTabs = (names, on) => `<div class="doctabs">${names.map((n, i) => `<button class="${i === on ? 'on' : ''}">${n}</button>`).join('')}<button class="shut" aria-label="Close tab">x</button></div>`;
const pager = n => `<div class="pager"><button>«</button><button>‹</button>${T('1')}<span class="cell">/ 1</span><button>›</button><button>»</button><span>${n} record(s) found</span></div>`;
const status = () => `<footer class="status"><span>UserID: ORT\\lsharits</span><span>Company: OLD REPUBLIC TITLE RESIDENTIAL INFORMATION SERVICES</span><span class="b">Open tasks: 9894</span><span class="off">CAP</span><span>NUM</span><span>Ready</span></footer>`;
const editTools = (extra = '') => `<div class="tools">${['save', 'safe', 'del', 'guide', 'jar', 'user'].map(n => I(n)).join('')}${I('find')}${['paste', 'copy', 'clip', 'sheet'].map(n => I(n)).join('')}<button class="drop">Fedex ▾</button>${['mail', 'db', 'dbstop'].map(n => I(n)).join('')}${['tree', 'cal', 'db'].map(n => I(n, 'dim')).join('')}${S('Order Navigator')}${['out', 'dart', 'scroll', 'memo', 'pen'].map(n => I(n)).join('')}${extra}${I('tag')}</div>`;
const NAV = { General: 'bucket', 'Title Insurance': 'ogrid', Closing: 'board', Vendor: 'person', Vendors: 'person', 'Misc. Info': 'misc', 'Title Search': 'tsearch', 'HUD/CDF': 'folder', 'Doc Prep': 'roll', Taxes: 'folder', 'Quality Control': 'check', Tasks: 'todo', 'Custom Fields': 'grid3', Notes: 'note' };
const CLOSING = ['General', 'Closing', 'Vendor', 'HUD/CDF', 'Doc Prep', 'Quality Control', 'Tasks', 'Custom Fields', 'Notes'];
const INSURED = ['General', 'Title Insurance', 'Vendors', 'Misc. Info', 'Title Search', 'Taxes', 'Quality Control', 'Tasks', 'Custom Fields', 'Notes'];
const navTabs = (names, on) => `<nav class="navtabs">${names.map(n => `<button class="${n === on ? 'on' : ''}">${I(NAV[n])}${n}</button>`).join('')}</nav>`;

// cols: [heading, width, class]; the first column is the row selector.
function table(cols, rows = [], sel = -1, c = '', bold = -1) {
  const head = cols.map(([h]) => `<th>${h}</th>`).join('');
  const body = rows.map((r, i) => `<tr class="${i === sel ? 'sel' : ''} ${i === bold ? 'b' : ''}"><td class="h">${i === sel ? '›' : ''}</td>${r.map((v, j) => `<td class="${cols[j + 1][2] || ''}">${v}</td>`).join('')}</tr>`).join('');
  return `<table class="tbl ${c}"><colgroup>${cols.map(([, w]) => `<col style="width:${w}px">`).join('')}</colgroup><thead><tr>${head}</tr></thead><tbody>${body}</tbody></table>`;
}

function orderList() {
  const info = F(
    L('From:', 'c1') + D('08/21/2023', 'c2') + L('Order Number:', 'c4 s2') + T('', 'c6') +
    L('To:', 'c1') + D('08/21/2023', 'c2') + L('Status:', 'c4 s2') + S('(All)', 'c6') +
    L('City:', 'c1') + T('', 'c2') + L('State:', 'c4 s2') + S('(All)', 'c6') +
    L('Address 1:', 'c1') + T('', 'c2 s5') +
    L('Bill To Customer ID:', 'c1') + T('', 'c2 s3'));
  const cust = F(
    L('Customer Number:', 'c1') + T('8573', 'c2') + L('Contact Name:', 'c4') + T('', 'c5') +
    L('Customer Name:', 'c1') + T('', 'c2') + L('Contact Types:', 'c4') + `<div class="types"><textarea class="area" ${take()}></textarea></div>` +
    L('Loan Number:', 'c1') + T('', 'c2') + L('Loan/Ref #2:', 'c1') + T('', 'c2') + L('Loan/Ref #3:', 'c1') + T('', 'c2'));
  return title('Order List - VINCA - QUA-ORTRIS v3.37.0.0', 'edge') + menu() + mainTools() + docTabs(['Product List', 'Order List', 'Search Bundle'], 1) +
    `<div class="search">${G('Order Information', info, 'ol-a')}${G('Customer and Contact', cust, 'ol-b')}<div class="ol-c">${B('lens', 'Search', 'w')}${B('cycle', 'Reset', 'w')}</div></div>` +
    `<div class="bar acts">${B('dbadd', 'Add', 'w')}${B('db', 'Copy', 'w')}${B('dbfind', 'View', 'w')}${B('edit', 'Edit', 'w')}</div>` +
    table([['', 9], ['Order Number', 71], ['Order Date &nbsp;▾', 63], ['Cust #', 43, 'n'], ['Customer Name', 113], ['Contact Types', 106], ['Contact Name', 86], ['Borrower Name', 84], ['Loan Number', 79], ['Status', 63], ['Hold Date', 81]],
      [['01-23001828', '08/21/2023', '8573', 'T E S T ACCOUNT-VINCA STAFF ...', 'Borrowers', 'SHARITS, BEAU', 'SHARITS, BEAU', 'VINCA DEMO-1', 'New', ''],
       ['01-23001827', '08/21/2023', '8573', 'T E S T ACCOUNT-VINCA STA...', 'Borrowers', 'SHARITS, LISA', 'SHARITS, LISA', 'VINCA DEMO', 'Open', '']], 0, 'deep', 1) +
    `<div class="fill"></div>${pager(2)}${status()}<svg class="cur cur-1"><use href="#ptr"/></svg>`;
}

const VENDORS = [['374907', '45806', 'ROJALIN SLUICE ACCOUNT'], ['374906', '39987', 'FRANK TABACCA'], ['374905', '45800', 'LISA SLUICE VENDOR'], ['374904', '34513', 'TEST-VINCA IT USE ONLY'], ['374903', '45785', 'MARIANNE COPY OF 34513']];

function vendorPage(o) {
  const icons = [['dbadd', 1], ['add'], ['edit'], ['del']].map(([n, d]) => B(n, '', 'sq', d)).join('') +
    ['crate', 'rss', 'form', 'coin', 'send', 'scrolls'].map(n => B(n, '', 'sq big')).join('') +
    B('clip2', '', 'sq') + B('talk', '', 'sq') + B('up', '', 'sq', !o.up) + B('down', '', 'sq');
  const vi = F(
    L('Vendor No:', 'c1') + T(o.no, 'c2 ro') + L('Office Phone:', 'c6') + T(o.office, 'c7 ro') +
    L('Vendor Name:', 'c1') + T(o.name, 'c2 s3 ro lk') + L('Cell Phone:', 'c6') + T('(952) 688-6903', 'c7 ro') +
    L('Total Order Completed:', 'c1') + T('0', 'c2 ro num') + B('', 'Refresh', 'flat c4') + L('Fax:', 'c6') + T(MASK, 'c7 ro') +
    L('Email:', 'c1') + T(o.email, 'c2 s6 ro'));
  const svi = F(
    L('Vendor No:', 'c1') + T('', 'c2 ro') + L('Office Phone:', 'c6') + T(MASK, 'c7 ro') +
    L('Vendor Name:', 'c1') + T('', 'c2 s3 ro') + L('Cell Phone:', 'c6') + T(MASK, 'c7 ro') +
    L('Total Order Completed:', 'c1') + T('', 'c2 ro') + B('', 'Refresh', 'flat c4', true) + L('Fax:', 'c6') + T(MASK, 'c7 ro') +
    L('Email:', 'c1') + T('', 'c2 s6 ro'));
  const dt = (a = '', b = '') => D(a, 'c7 ro') + M(b, 'c9 ro');
  const left = F(
    L('Vendor Order No:', 'c1') + T('', 'c2 s2 ro') + K('Email/Fax Sent', 'c6', true) + dt('08/21/2023', '3:49 PM') +
    L('Vendor Product:', 'c1') + T('SIGNING 3', 'c2 s3 ro') + L('Projected Due Date:', 'c6') + dt('08/21/2023', '5:49 PM') +
    L('Vendor Order Status:', 'c1') + S(o.status, 'c2 s3 ro lite') + K('Confirmed', 'c6') + dt() +
    L('Vendor Fee:', 'c1') + T('$0.00', 'c2 ro num') + K('Doc Sent', 'c6') + dt() +
    L('Adjustment Fee:', 'c1') + T('$0.00', 'c2 ro num') + K('Work Completed', 'c6') + dt() +
    L('Actual Fee:', 'c1') + T('$0.00', 'c2 ro num b') + K('Received', 'c6') + dt() + S('', 'c11 ro lite') +
    K('Auto Update Closing Complete', 'c2 s4') + K('Work Accepted', 'c6 mute', false, 'radio') + dt() +
    K('Work Rejected', 'c6 mute', false, 'radio') + dt() + K('', 'c6') + dt(), 'voi-a');
  const send = F(
    L('Address:', 'c1') + T('400 SOUTH 2ND AVENUE', 'c2 s9 ro') +
    T('', 'c2 s5 ro') + L('Unit#:', 'c8 s2') + T('', 'c10 ro') +
    L('ZIP/State/City:', 'c1') + T('55401', 'c2 ro') + '<span class="c3 r">-</span>' + T('2406', 'c4 ro') + S('MN', 'c6 s2 ro lite') + T('MINNEAPOLIS', 'c9 s2 ro') +
    L('County:', 'c1 mute') + S('HENNEPIN', 'c2 s6 ro lite') +
    K('Signature Required', 'c2 s6') +
    L('Name:', 'c1') + T('', 'c2 s9 ro') + L('Email:', 'c1') + T('', 'c2 s9 ro') +
    L('Home Phone:', 'c1') + T(MASK, 'c2 s3 ro') + L('Fax No:', 'c5 s2') + T(MASK, 'c7 s4 ro'));
  const sign = F(
    L('Address:', 'c1') + T('4408 DENBIGH ROAD', 'c2 s4 ro') + T('', 'c2 s4 ro') +
    L('ZIP/State/City:', 'c1') + T('55364', 'c2 ro') + '<span class="c3 r">-</span>' + T('1915', 'c4 ro') +
    L('County:', 'c1 mute') + T('HENNEPIN', 'c2 s4 ro') + '<span class="c1">&nbsp;</span>'.repeat(4));
  return title('Edit Closing (#01-23001828-04E)', 'edge short') + editTools() + `<div class="vend"><div class="top"><div class="body">
    <h3 class="head">Vendor List</h3><div class="bar icons">${icons}</div>` +
    table([['', 9], ['State', 32], ['County', 70], ['Vendor Ord...', 55, 'n'], ['Vendor Order No', 89], ['Vendor No', 55, 'n'], ['Vendor Name', 190], ['Sub-Vendor No', 59], ['Vendor Product', 145], ['Status', 88]],
      VENDORS.map(([a, b, c]) => ['MN', 'HENNEPIN', a, '', b, c, '', 'SIGNING 3', 'Sent']), o.sel) +
    `<div class="pair vi">${G('Vendor Information', vi, 'vi-a')}${G('Sub-Vendor Information', svi, 'vi-b')}</div>
    <h3 class="head">Vendor Order Information</h3><div class="voi">${left}${G('Send Documents To', send, 'voi-b')}${G('Signing Address', sign, 'voi-c')}</div></div>
    <div class="sbar">▴<b></b>▾</div></div>
    <h3 class="head">Vendor Quality Rank</h3><div class="bar">${B('add', '', 'sq')}${B('edit', '', 'sq', true)}</div><div class="rank">` +
    table([['', 9], ['State', 40], ['County', 89], ['Vendor No', 60], ['Vendor Name', 93], ['Vendor Product', 111], ['Quality', 57], ['Value &nbsp; &nbsp;▾', 54], ['Comment', 134], ['Added By', 67], ['Date', 90]]) +
    `</div><div class="fill"></div></div>${navTabs(CLOSING, 'Vendor')}<div class="foot"></div>`;
}

function desk(c) {
  const form = F(['From:', 'To:', 'Product Number:', 'Product ID:', 'Product Status:'].map(t => `<span class="cell">${t}</span>`).join(''));
  const row = n => ['01-23001828', '', '', '', '', n];
  return `<div class="desk ${c}">${title('Product List - VINCA - QUA-ORTRIS v3.37.0.0', 'faded')}${menu()}${mainTools()}${docTabs(['Product List', 'Order List'], 0)}
    ${G('Product Information', form, 'desk-search')}<div class="shade"></div><div class="bar acts">${B('dbfind', 'View', 'w')}</div>` +
    table([['', 11], ['Product Number', 60], ['Product Type', 210], ['Customer Name', 240], ['Order Date', 165], ['Due Date', 66], ['Loan Number', 74]],
      [...Array(4).fill(row('VINCA DEMO-1')), ...Array(4).fill(row('VINCA DEMO'))], 3, 'tallrows') +
    `<div class="fill"></div>${pager(8)}${status()}</div>`;
}

function closingPage() {
  const cells = a => a.map(t => t.startsWith('@') ? A(t.slice(1)) : `<span class="cell">${t}</span>`).join('');
  const behind = `<div class="win back ins">${title('Edit Insured (#01-23001828-01T)', 'faded tall')}${editTools()}<div class="ins-col">
    ${G('Order Information', F(cells(['Product Code:', 'Product Status:', '&nbsp;', 'Product Category:', 'Change Product:', 'Product Number:', 'Product Name:'])), 'g1')}
    ${G('Customer Information', F(cells(['Customer No:', '@Customer Name:', 'Phone No:', 'Email:'])), 'g2')}
    ${G('Property Information', F(cells(['Address:', '&nbsp;', 'Zip/ <a href="#">State</a>', '@County:', 'Loan Amount:', 'Loan/Ref:'])), 'g3')}
    </div>${navTabs(INSURED, 'General')}<div class="foot"></div></div>`;
  const gen = F(
    L('Email Product To:', 'c1') + T('ovm.delivered@oldrepublictitlesvs.com', 'c2 s4') + K('Wire Received', 'c7 s2') + L('Fund Account:', 'c9') + S('6021 CITI BANK', 'c11') +
    L('E-Closing:', 'c1') + S('', 'c2') + L('Wire Date:', 'c4') + D('', 'c5 s3') + L('Funding Number:', 'c8 s2 r') + T('', 'c11') +
    A('Assigned Funder:', 'c1') + T('', 'c2') + T('', 'c4 s4 ro') + L('Wire Amount:', 'c8 s2 r') + T('$0.00', 'c11 num') +
    A('Curative Incomplete', 'c8 s2 b red') + A('Insured Complete', 'c11 b'));
  const ia = F(['Internal Closer:', 'HUD Prep Assigned To:', 'Scheduler:', 'QA Reviewer:'].map(t => A(t, 'c1') + T('', 'c2') + T('', 'c4 ro')).join(''));
  const a = (c = 'ro') => D('', 'c2 ' + c) + M('', 'c4 s2 ' + c), b = () => D('', 'c8 ro') + M('', 'c10 ro'), d = (c = 'ro') => D('', 'c13 ' + c) + M('', 'c15 ' + c);
  const wf = F(
    L('Rate-Lock Expiration:', 'c1 red') + D('', 'c2') + B('page', '', 'flat c5 s2') + K('HUD To Review', 'c7') + b() + K('Signed Package Received', 'c12') + d() +
    L('Expected Closing:', 'c1') + D('', 'c2 hot') + M('', 'c4 s2') + K('HUD Reviewed', 'c7 b') + b() + K('Package Reviewed', 'c12 b') + d() +
    K('Scheduled Closing', 'c1') + a() + K('Final HUD to Customer', 'c7') + b() + K('Completed Docs to Lender', 'c12 b') + d() +
    K('Docs Req. from Customer', 'c1') + a() + K('HUD Lender Approved', 'c7') + b() + L('Projected Disbursement:', 'c12') + d('') +
    K('Instruction Received', 'c1') + a() + K('Docs Sent to Sign', 'c7') + b() + K('Actual Disbursement', 'c12') + d() +
    K("Docs Rec'd from Customer", 'c1 b') + a() + K('Closing Complete', 'c7 b') + b());
  return desk('') + behind + `<div class="win clo">${title('Edit Closing (#01-23001828-04E)', 'tall')}${editTools()}
    <div class="pair gen">${G('Generals', gen, 'gen-a')}${G('Internal Assignments', ia, 'gen-b')}</div>${G('Work flow', wf, 'wf')}
    <h3 class="head">Shipping Information</h3><div class="bar">${B('add', '', 'sq')}${B('edit', '', 'sq', 1)}${B('del', '', 'sq', 1)}</div>` +
    table([['', 9], ['Documents Shipped', 88], ['Vendor Order ID', 73], ['Vendor No', 51], ['Vendor Name', 65], ['Ship To', 54], ['Ship Date', 50], ['Ship Tracking No', 75], ['Ship Courier', 61], ['Created By', 65], ['Modified By', 67]]) +
    `<div class="gap1"></div><h3 class="head">1099 Records</h3><div class="bar low">${B('add', '', 'sq')}${B('edit', '', 'sq', 1)}${B('del', '', 'sq', 1)}${B('db', '', 'sq', 1)}${B('web', '', 'sq')}</div>` +
    table([['', 9], ['Seller Name', 141], ['Seller SSN', 161], ['Seller Spouse Name', 154], ['Seller Spouse SSN', 194]]) +
    `<div class="gap2"></div><h3 class="head">Seller Information</h3><div class="seller"><i></i><i></i><i></i></div>${navTabs(CLOSING, 'Closing')}<div class="foot"></div></div>
    <svg class="cur cur-3"><use href="#ptr"/></svg>`;
}

function vendorDialog() {
  const product = F(L('Vendor Product:', 'c1') + S('SIGNING 3', 'c2 s2'), 'dg1');
  const info = F(
    L('Vendor No:', 'c1') + S('45800', 'c2 ro lite') + L('Vendor Name:', 'c5') + T('LISA SLUICE VENDOR', 'c6 s4 ro') +
    L('Sub-Vendor:', 'c1') + S('', 'c2 s2 ro lite') + L('Email:', 'c5') + T('lsharits@oldrepublictitle.com', 'c6 s4 ro') +
    L('Phone:', 'c5') + T('(612) 336-7036', 'c6 ro') + L('Fax:', 'c8') + T(MASK, 'c9 ro'));
  const order = F(
    L('Vendor Order No:', 'c1') + T('', 'c2') + L('Vendor Fee:', 'c1') + T('$0.00', 'c2 ro num') +
    L('Adjustment Fee:', 'c1') + T('$0.00', 'c2 num') + L('Actual Fee:', 'c1') + T('$0.00', 'c2 ro num b') +
    K('Auto Update Closing Complete', 'c2 s2'));
  const send = F(
    L('Address:', 'c1') + T('401 SOUTH 2ND AVENUE', 'c2 s9') +
    `<div class="c1">${B('copy', '', 'sq')}</div>` + T('', 'c2 s5') + L('Unit#:', 'c8 s2') + T('', 'c10') +
    L('ZIP/State/City:', 'c1') + T('55401', 'c2') + '<span class="c3 r">-</span>' + T('', 'c4') + S('MN', 'c6 s2') + T('MINNEAPOLIS', 'c9 s2') +
    A('County:', 'c1') + S('HENNEPIN', 'c2 s6') + K('Signature Required', 'c2 s6') +
    L('Name:', 'c1') + T('SMTIH, JOE', 'c2 s9') + L('Email:', 'c1') + T('ovm.delivered@oldrepublictitlesvs.com', 'c2 s9') +
    L('Home Phone:', 'c1') + T(MASK, 'c2 s3') + L('Fax No:', 'c5 s2') + T(MASK, 'c7 s4') +
    L('Pager No:', 'c1') + T(MASK, 'c2 s3') + L('Cell No:', 'c5 s2') + T('(555) 555-5555', 'c7 s4') +
    K('Disable Auto Notification When Assignment Confirmed', 'c2 s9'));
  const off = () => D('', 'c2 ro') + M('', 'c4 ro');
  const flow = F(
    L('Vendor Order Status:', 'c1') + S('Confirmed', 'c2 s3 ro lite') +
    L('Projected Due Date:', 'c1') + D('08/21/2023', 'c2') + M('5:49 PM', 'c4') +
    K('Email/Fax Sent', 'c1', true) + D('08/21/2023', 'c2 ro') + M('3:49 PM', 'c4 ro') +
    K('Confirmed', 'c1', true) + D('08/21/2023', 'c2') + M('3:50 PM', 'c4') +
    K('Doc Sent', 'c1') + off() + K('Work Completed', 'c1') + off() + K('Received', 'c1') + off() +
    L('Received Method:', 'c1') + S('', 'c2 ro lite') +
    K('Work Accepted', 'c1 mute', false, 'radio') + off() + K('Work Rejected', 'c1 mute', false, 'radio') + off());
  return `<div class="win dlg"><header class="title tall">${I('app')}<span>Edit Vendor</span><button aria-label="Minimize">_</button><button class="close" aria-label="Close">×</button></header>
    ${product}${G('Vendor Information', info, 'dg2')}<div class="dcols"><div class="dl">${G('Vendor Order Information', order, 'dg3')}${G('Send Documents To', send, 'dg4')}</div>
    <div class="dr">${G('Work Flow', flow, 'dg5')}<div class="cmt"><div>${L('Comments:')}${B('edit', 'Edit')}</div><div class="wrap"><textarea class="area" ${take()}></textarea><i></i></div></div></div></div>
    <div class="btns">${B('save', 'Save', 'def')}${B('del', 'Cancel')}</div></div><svg class="cur cur-4"><use href="#ptr"/></svg>`;
}

function taxesPage() {
  const auth = table([['', 9], ['Authority Name', 96], ['City', 78], ['Tax Type', 54], ['Tax Collector', 77], ['Authority Phone', 71], ['Status', 72]],
    [['SUMMIT COUNTY', 'AKRON', 'COUNTY', 'FISCAL OFFICER', '(330) 643-2587', 'Active']], 0) + '<div class="pad1"></div>' + F(
    L('Authority Name:', 'c1') + T('SUMMIT COUNTY', 'c2 s6 ro') + L('Tax Types:', 'c9') + S('COUNTY', 'c10 ro lite') +
    L('Mailing Address:', 'c1') + T('175 SOUTH MAIN STREET', 'c2 s6 ro') + L('Tax Collector:', 'c9') + T('FISCAL OFFICER', 'c10 s4 ro') +
    T('ROOM 320', 'c2 s6 ro') + L('Phone No:', 'c9') + T('(330) 643-2587', 'c10 ro') +
    L('ZIP/State/City', 'c1') + T('44308', 'c2 ro') + T('OH', 'c4 ro') + T('AKRON', 'c6 ro') + L('Web Site URL:', 'c9') + T('HTTP://FISCALOFFICE.SUMMITOH.NET/', 'c10 s2 ro') + B('web', '', 'flat c13'));
  const info = `<div class="bar">${['add', 'edit', 'del', 'dbfind', 'cal'].map(n => B(n, '', 'sq')).join('')}</div>
    <table class="tbl"><colgroup>${[9, 86, 89, 87, 91, 93].map(w => `<col style="width:${w}px">`).join('')}</colgroup>
    <thead><tr>${['', 'Tax Year', 'Tax Period', 'Tax Account Number', 'Good Through', 'Delinquent Amount'].map(h => `<th>${h}</th>`).join('')}</tr></thead>
    <tbody><tr class="tree"><td class="h"></td><td colspan="5">⊟ SUMMIT COUNTY</td></tr>
    <tr class="sel"><td class="h">›</td><td>2023</td><td>SEMIANNUAL</td><td>44-4444444</td><td></td><td></td></tr></tbody></table><div class="pad1"></div>`;
  const assess = F(
    L('Tax Account Number:', 'c1') + S('44-4444444', 'c2') + L('Notes:', 'c4') + `<div class="tnotes wrap"><textarea class="area" ${take()}></textarea><i></i></div>` +
    L('Land:', 'c1') + T('', 'c2') + L('Buildings:', 'c1') + T('', 'c2') + L('Total Value:', 'c1') + T('', 'c2 ro'));
  const more = `<div class="bar">${B('add', '', 'sq')}${B('edit', '', 'sq', 1)}${B('del', '', 'sq', 1)}</div>` +
    table([['', 9], ['Tax Account Number', 124], ['Land', 104], ['Building', 104], ['Total Value', 115]]);
  const cert = F(`<div class="req">${K('Required')}${K('Included')}</div>` +
    L('Ordered:', 'c1') + D('', 'c2 dis lite') + M('', 'c4 dis ro') + L('Completed:', 'c1') + D('', 'c2 dis lite') + M('', 'c4 dis ro'));
  const miscInfo = F(L('Property Type:', 'c1') + S('', 'c2') + L('Condominium Name:', 'c1') + T('', 'c2') + L('PUD Name:', 'c1') + T('', 'c2') +
    L('New Construction:', 'c1') + S('', 'c2') + L('Taxes Exempt:', 'c1') + S('', 'c2'));
  return desk('up') + `<div class="win back tax">${title('Edit Insured (#01-23001828-01T)', 'faded')}${editTools(I('dbfind'))}<h3 class="head">Taxes</h3>
    <div class="taxes"><div class="tl"><div class="bar">${['add', 'del', 'dbadd', 'dbfind'].map(n => B(n, '', 'sq')).join('')}</div>
    ${G('Tax Authority Information', auth, 'tg1')}${G('Tax Information', info, 'tg2')}${G('Assessment Information', assess, 'tg3')}${G('Additional Assessment Information', more, 'tg4')}</div>
    <div class="tr">${G('Tax Certifications', cert, 'tg5')}${G('Miscellaneous Information', miscInfo, 'tg6')}</div><div class="tz"></div></div>
    ${navTabs(INSURED, 'Taxes')}<div class="foot"></div></div>`;
}

const sent = { no: '45806', office: '(612) 371-1111', name: 'ROJALIN SLUICE ACCOUNT', email: 'rojalinr@oldrepublictitle.com', status: 'Sent', sel: 0 };
const confirmed = { no: '45800', office: '(612) 336-7036', name: 'LISA SLUICE VENDOR', email: 'lsharits@oldrepublictitle.com', status: 'Confirmed', sel: 2, up: true };
const pointer = '<svg class="cur cur-2"><use href="#ptr"/></svg>';
document.getElementById('wall').innerHTML = [
  orderList(),
  vendorPage(sent) + pointer,
  closingPage(),
  vendorPage(sent) + pointer,
  `<div class="zoomed">${vendorPage(confirmed)}</div>${vendorDialog()}`,
  taxesPage(),
].map(h => `<section class="panel">${h}</section>`).join('');
```
